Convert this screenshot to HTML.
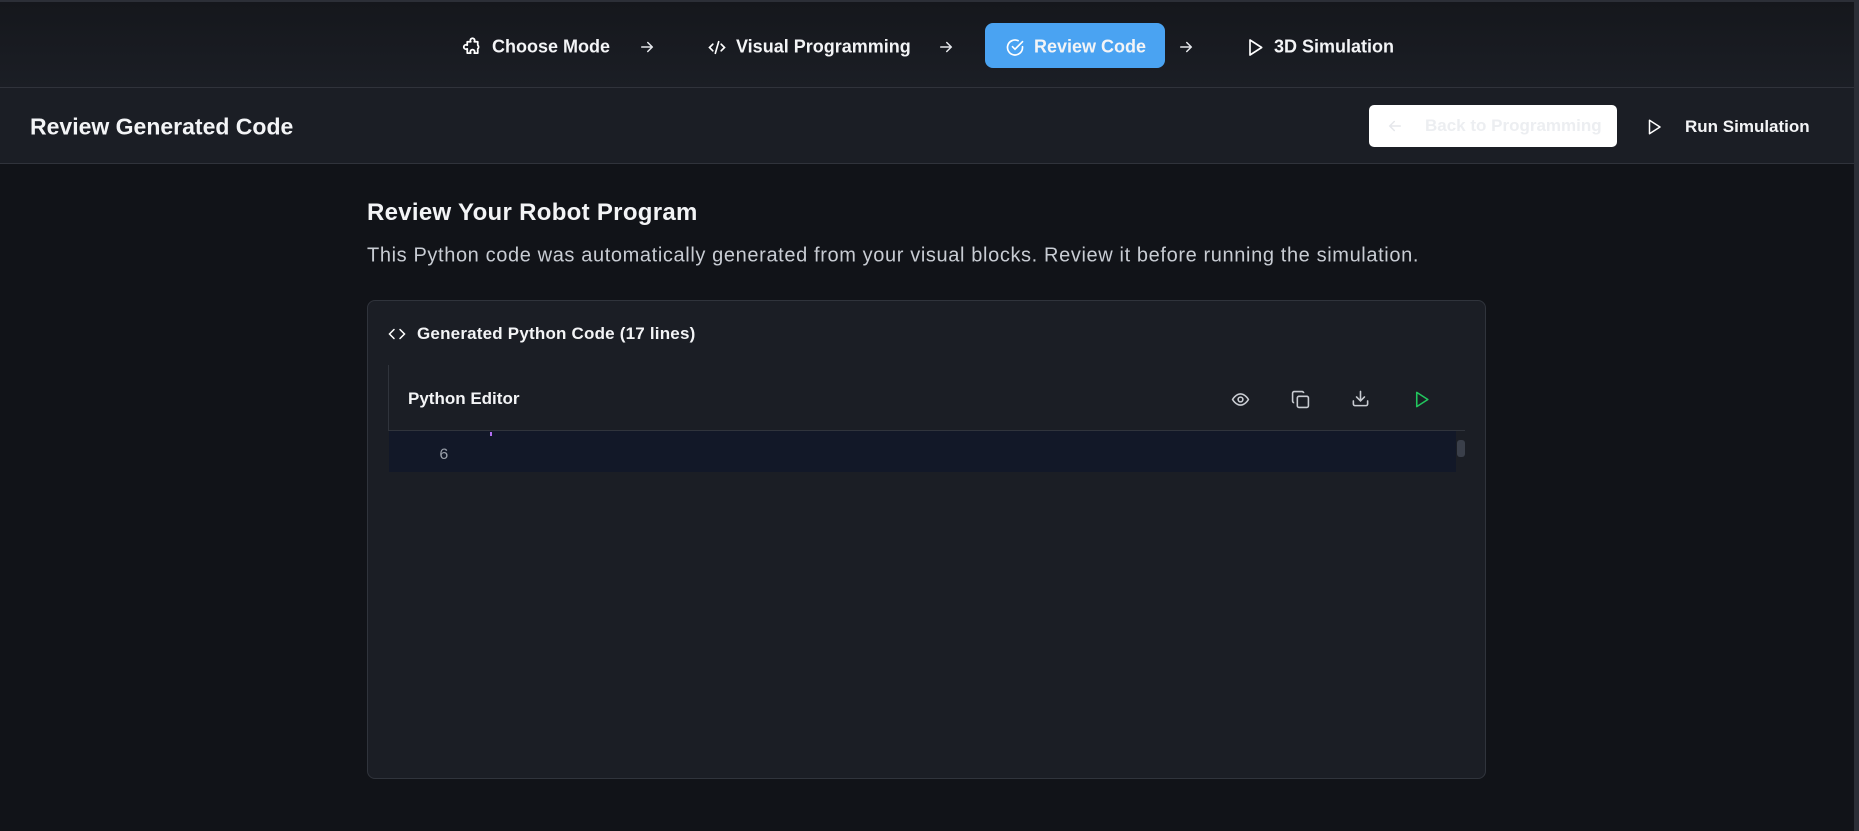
<!DOCTYPE html>
<html><head><meta charset="utf-8"><style>
*{margin:0;padding:0;box-sizing:border-box}
body{width:1859px;height:831px;overflow:hidden;background:#111318;font-family:"Liberation Sans",sans-serif;color:#f3f4f6;position:relative}
.nav{position:absolute;left:0;top:0;width:1854px;height:88px;background:linear-gradient(#15171c,#1b1e25);border-top:2px solid #2c2f37;border-bottom:1px solid #30333b}
.hdr{position:absolute;left:0;top:88px;width:1854px;height:76px;background:#1b1e25;border-bottom:1px solid #30333b}
.sb{position:absolute;left:1854px;top:0;width:5px;height:831px;background:#2b2e36}
.item{position:absolute;top:47px;transform:translateY(-50%);font-size:18px;font-weight:bold;color:#f3f4f6;display:flex;align-items:center;gap:9px;white-space:nowrap}
.arr{position:absolute;top:47px;transform:translateY(-50%)}
.pill{position:absolute;left:985px;top:23px;width:180px;height:45px;background:#4aa3f2;border-radius:8px}
svg{display:block}
</style></head><body>
<div class="nav"></div>
<div class="hdr"></div>
<div class="sb"></div>
<div class="pill"></div>

<div class="item" style="left:462px"><svg width="21" height="21" viewBox="0 0 24 24" fill="none" stroke="#fff" stroke-width="2" stroke-linejoin="round"><path d="M20 13a2.5 2.5 0 0 0 0-4V5h-4a2.5 2.5 0 1 0-4 0H8v4a2.5 2.5 0 1 0 0 4v5h4a2.5 2.5 0 1 1 4 0h4z" transform="translate(-2 1)"/></svg>Choose Mode</div>
<svg class="arr" style="left:638px" width="18" height="18" viewBox="0 0 24 24" fill="none" stroke="#e5e7eb" stroke-width="2" stroke-linecap="round"><path d="M5 12h14M13 6l6 6-6 6"/></svg>
<div class="item" style="left:707px"><svg width="20" height="20" viewBox="0 0 24 24" fill="none" stroke="#fff" stroke-width="2" stroke-linecap="round"><path d="M7 8l-4 4 4 4M17 8l4 4-4 4M14 5l-4 14"/></svg>Visual Programming</div>
<svg class="arr" style="left:937px" width="18" height="18" viewBox="0 0 24 24" fill="none" stroke="#e5e7eb" stroke-width="2" stroke-linecap="round"><path d="M5 12h14M13 6l6 6-6 6"/></svg>
<div class="item" style="left:1005px"><svg width="20" height="20" viewBox="0 0 24 24" fill="none" stroke="#fff" stroke-width="2" stroke-linecap="round"><path d="M21 11v1a9 9 0 1 1-5.3-8.2"/><path d="M9 11l3 3 9-9"/></svg>Review Code</div>
<svg class="arr" style="left:1177px" width="18" height="18" viewBox="0 0 24 24" fill="none" stroke="#e5e7eb" stroke-width="2" stroke-linecap="round"><path d="M5 12h14M13 6l6 6-6 6"/></svg>
<div class="item" style="left:1245px"><svg width="20" height="20" viewBox="0 0 24 24" fill="none" stroke="#fff" stroke-width="2" stroke-linejoin="round"><path d="M6 3l14 9-14 9z"/></svg>3D Simulation</div>

<div style="position:absolute;left:30px;top:127px;transform:translateY(-50%);font-size:23px;font-weight:bold">Review Generated Code</div>
<div style="position:absolute;left:1369px;top:105px;width:248px;height:42px;background:#fff;border-radius:5px;display:flex;align-items:center;font-size:17px;font-weight:bold;color:#eceef1">
<svg style="margin-left:17px" width="18" height="18" viewBox="0 0 24 24" fill="none" stroke="#e5e7eb" stroke-width="2" stroke-linecap="round"><path d="M19 12H5M11 6l-6 6 6 6"/></svg><span style="margin-left:21px">Back to Programming</span></div>
<svg style="position:absolute;left:1645px;top:118px" width="18" height="18" viewBox="0 0 24 24" fill="none" stroke="#fff" stroke-width="2" stroke-linejoin="round"><path d="M6 3l14 9-14 9z"/></svg>
<div style="position:absolute;left:1685px;top:127px;transform:translateY(-50%);font-size:17px;font-weight:bold">Run Simulation</div>

<div style="position:absolute;left:367px;top:213px;transform:translateY(-50%);font-size:24px;font-weight:bold;letter-spacing:0.3px">Review Your Robot Program</div>
<div style="position:absolute;left:367px;top:256px;transform:translateY(-50%);font-size:20px;letter-spacing:0.62px;color:#c8ccd3;white-space:nowrap">This Python code was automatically generated from your visual blocks. Review it before running the simulation.</div>

<div style="position:absolute;left:367px;top:300px;width:1119px;height:479px;background:#1b1e25;border:1px solid #30343c;border-radius:8px"></div>
<svg style="position:absolute;left:387px;top:325px" width="20" height="18" viewBox="0 0 24 24" fill="none" stroke="#fff" stroke-width="2" stroke-linecap="round"><path d="M8 6l-6 6 6 6M16 6l6 6-6 6"/></svg>
<div style="position:absolute;left:417px;top:334px;transform:translateY(-50%);font-size:17px;font-weight:bold;letter-spacing:0.2px">Generated Python Code (17 lines)</div>

<div style="position:absolute;left:388px;top:365px;width:1077px;height:66px;border-left:1px solid #30343c;border-bottom:1px solid #30343c"></div>
<div style="position:absolute;left:408px;top:399px;transform:translateY(-50%);font-size:17px;font-weight:bold">Python Editor</div>
<svg style="position:absolute;left:1231px;top:390px" width="19" height="19" viewBox="0 0 24 24" fill="none" stroke="#c9ccd2" stroke-width="2"><path d="M2 12s4-7 10-7 10 7 10 7-4 7-10 7S2 12 2 12z"/><circle cx="12" cy="12" r="3"/></svg>
<svg style="position:absolute;left:1291px;top:390px" width="19" height="19" viewBox="0 0 24 24" fill="none" stroke="#c9ccd2" stroke-width="2" stroke-linejoin="round"><rect x="8" y="8" width="14" height="14" rx="2"/><path d="M4 16a2 2 0 0 1-2-2V4a2 2 0 0 1 2-2h10a2 2 0 0 1 2 2"/></svg>
<svg style="position:absolute;left:1351px;top:389px" width="19" height="19" viewBox="0 0 24 24" fill="none" stroke="#c9ccd2" stroke-width="2" stroke-linecap="round"><path d="M21 15v4a2 2 0 0 1-2 2H5a2 2 0 0 1-2-2v-4M7 10l5 5 5-5M12 15V3"/></svg>
<svg style="position:absolute;left:1412px;top:390px" width="19" height="19" viewBox="0 0 24 24" fill="none" stroke="#22c55e" stroke-width="2" stroke-linejoin="round"><path d="M6 3l14 9-14 9z"/></svg>

<div style="position:absolute;left:389px;top:431px;width:1067px;height:41px;background:#121828"></div>
<div style="position:absolute;left:490px;top:432px;width:2px;height:4px;background:#b06ef0"></div>
<div style="position:absolute;left:439px;top:455px;transform:translateY(-50%);font-family:'Liberation Mono',monospace;font-size:16px;color:#9aa0aa">6</div>
<div style="position:absolute;left:1457px;top:440px;width:8px;height:17px;background:#3a3f4a;border-radius:3px"></div>
</body></html>
